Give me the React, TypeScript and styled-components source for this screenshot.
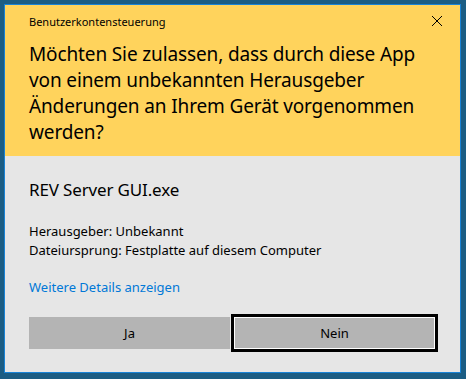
import React from "react"
import styled, { createGlobalStyle } from "styled-components"

const GlobalStyle = createGlobalStyle`
  html, body {
    margin: 0;
    padding: 0;
    background: #1b5d84;
  }
  body {
    font-family: "Noto Sans", "Open Sans", sans-serif;
    color: #000;
  }
`

const Screen = styled.div`
  width: 466px;
  height: 379px;
  padding: 4px 0 0 4px;
  box-sizing: border-box;
`

const Dialog = styled.div`
  width: 457px;
  height: 369px;
  border: 1px solid #1883d7;
  box-sizing: border-box;
  display: flex;
  flex-direction: column;
  background: #e6e6e6;
`

const Header = styled.div`
  background: #ffd35c;
  height: 151px;
  padding: 0 0 0 24px;
  box-sizing: border-box;
  display: flex;
  flex-direction: column;
`

const TitleRow = styled.div`
  display: flex;
  align-items: center;
  justify-content: space-between;
  height: 32px;
  padding-right: 17px;
`

const Caption = styled.span`
  font-size: 11px;
`

const Close = styled.button`
  border: none;
  background: none;
  padding: 0;
  width: 12px;
  height: 12px;
  display: flex;
  svg {
    display: block;
  }
`

const Question = styled.div`
  font-size: 19px;
  line-height: 26px;
  margin-top: 4px;
  letter-spacing: -0.13px;
`

const Body = styled.div`
  flex: 1;
  padding: 22px 24px 0 24px;
  display: flex;
  flex-direction: column;
`

const AppName = styled.div`
  font-size: 17px;
  line-height: 24px;
  letter-spacing: -0.15px;
`

const Info = styled.div`
  margin-top: 20px;
  font-size: 13px;
  line-height: 19px;
`

const DetailsLink = styled.a`
  margin-top: 18px;
  font-size: 13px;
  line-height: 19px;
  color: #0078d7;
  text-decoration: none;
`

const Buttons = styled.div`
  display: grid;
  grid-template-columns: 201px 201px;
  gap: 4px;
  margin-top: 20px;
`

const Button = styled.button<{ $focused?: boolean }>`
  height: 32px;
  border: none;
  background: #b4b4b4;
  font-family: inherit;
  font-size: 13px;
  color: #000;
  padding: 0;
  box-shadow: ${(p) => (p.$focused ? "inset 0 0 0 1px #fff" : "none")};
  outline: ${(p) => (p.$focused ? "3px solid #000" : "none")};
`

export default function App() {
  return (
    <Screen>
      <GlobalStyle />
      <Dialog>
        <Header>
          <TitleRow>
            <Caption>Benutzerkontensteuerung</Caption>
            <Close aria-label="Schließen">
              <svg width="12" height="12" viewBox="0 0 12 12">
                <path d="M1 1 L11 11 M11 1 L1 11" stroke="#000" strokeWidth="1" fill="none" />
              </svg>
            </Close>
          </TitleRow>
          <Question>
            Möchten Sie zulassen, dass durch diese App
            <br />
            von einem unbekannten Herausgeber
            <br />
            Änderungen an Ihrem Gerät vorgenommen
            <br />
            werden?
          </Question>
        </Header>
        <Body>
          <AppName>REV Server GUI.exe</AppName>
          <Info>
            Herausgeber: Unbekannt
            <br />
            Dateiursprung: Festplatte auf diesem Computer
          </Info>
          <DetailsLink href="#">Weitere Details anzeigen</DetailsLink>
          <Buttons>
            <Button>Ja</Button>
            <Button $focused>Nein</Button>
          </Buttons>
        </Body>
      </Dialog>
    </Screen>
  )
}
